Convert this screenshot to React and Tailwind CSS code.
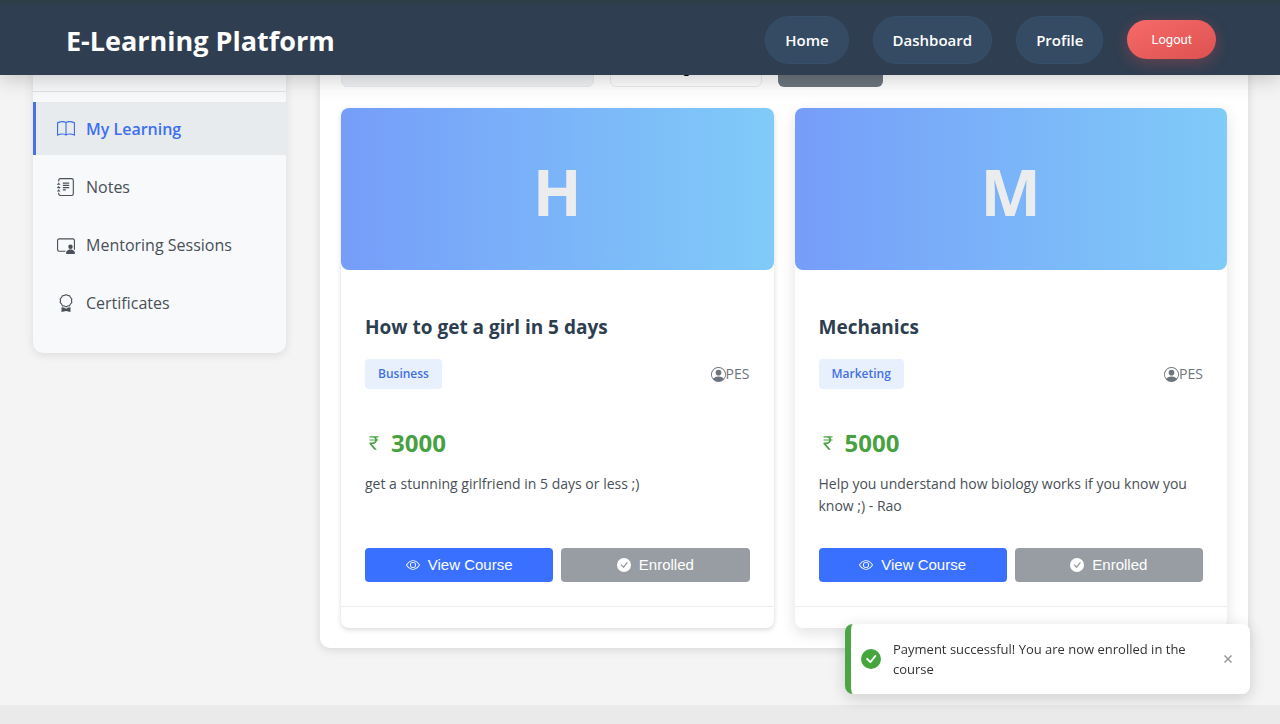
import {
  BsAward,
  BsBook,
  BsCheckCircleFill,
  BsCurrencyRupee,
  BsEye,
  BsJournalText,
  BsPersonCircle,
  BsPersonVideo3,
} from "react-icons/bs";

const navLinks = ["Home", "Dashboard", "Profile"];

const sideLinks = [
  { label: "My Learning", Icon: BsBook, active: true },
  { label: "Notes", Icon: BsJournalText },
  { label: "Mentoring Sessions", Icon: BsPersonVideo3 },
  { label: "Certificates", Icon: BsAward },
];

const courses = [
  {
    title: "How to get a girl in 5 days",
    category: "Business",
    author: "PES",
    price: 3000,
    text: "get a stunning girlfriend in 5 days or less ;)",
  },
  {
    title: "Mechanics",
    category: "Marketing",
    author: "PES",
    price: 5000,
    text: "Help you understand how biology works if you know you know ;) - Rao",
    raised: true,
  },
];

function Header() {
  return (
    <header className="sticky top-0 z-10 flex h-[75px] items-center justify-between border-t-4 border-[#2f3d49] bg-[#2f3e51] px-16 pl-[66px] shadow-[0_4px_20px_rgba(0,0,0,0.2)]">
      <h1 className="pt-[2px] text-[27px] leading-9 font-bold text-white">E-Learning Platform</h1>
      <nav className="flex items-center gap-6">
        {navLinks.map((label) => (
          <a
            key={label}
            href="#"
            className="rounded-3xl border border-[#35506b] bg-[#354b64] px-[19px] py-[10px] text-[15px] leading-[26px] font-semibold text-white"
          >
            {label}
          </a>
        ))}
        <button
          type="button"
          className="h-[39px] rounded-[20px] bg-linear-to-br from-[#f66a6a] to-[#dd5151] px-6 font-['Roboto',sans-serif] text-[13px] text-white shadow-[0_4px_15px_rgba(238,82,83,0.3)]"
        >
          Logout
        </button>
      </nav>
    </header>
  );
}

function Sidebar() {
  return (
    <aside className="w-[253px] shrink-0 rounded-[10px] bg-[#f8f9fb] pb-6 shadow-[0_2px_10px_rgba(0,0,0,0.1)]">
      <div className="h-[67px] border-b border-[#dee2e6]" />
      <nav className="mt-[10px] flex flex-col gap-[5px]">
        {sideLinks.map(({ label, Icon, active }) => (
          <a
            key={label}
            href="#"
            className={
              "flex h-[53px] items-center gap-[11px] border-l-3 pt-px pl-[21px] text-base " +
              (active
                ? "border-[#4a72e0] bg-[#e8ebee] font-semibold text-[#3d6ff0]"
                : "border-transparent text-[#495057]")
            }
          >
            <Icon className="size-[18px]" />
            {label}
          </a>
        ))}
      </nav>
    </aside>
  );
}

function Filters() {
  return (
    <form className="mb-[21px] flex h-[41px] gap-4 font-['Liberation_Sans',sans-serif] text-base">
      <input
        type="search"
        aria-label="Search courses"
        className="w-[253px] rounded-md border border-[#e8eaed] bg-[#f1f2f5] px-3"
      />
      <select
        aria-label="Category"
        className="w-[152px] appearance-none rounded-md border border-[#e9ebed] bg-white px-[15px] pt-[3px] text-black"
      >
        <option>All Categories</option>
      </select>
      <button type="button" aria-label="Filter" className="w-[105px] rounded-md bg-[#6c757d]" />
    </form>
  );
}

function CourseCard({ title, category, author, price, text, raised }) {
  return (
    <article
      className={
        "flex flex-col rounded-lg bg-white pb-[21px] " +
        (raised ? "shadow-[0_5px_15px_rgba(0,0,0,0.12)]" : "shadow-[0_2px_5px_rgba(0,0,0,0.15)]")
      }
    >
      <div className="flex h-[162px] items-center justify-center rounded-lg bg-linear-to-r from-[#769df9] to-[#80cbf8] pt-[5px] text-[64px] font-bold text-[#ebeced]">
        {title[0]}
      </div>
      <div className="flex flex-1 flex-col border-b border-[#eeeeee] px-6 pt-[45px] pb-6">
        <h2 className="text-[19px] leading-6 font-bold text-[#2c3e50]">{title}</h2>
        <div className="mt-5 flex items-center justify-between">
          <span className="rounded bg-[#e8f0fe] px-[13px] text-xs leading-[30px] font-semibold text-[#4470e2]">
            {category}
          </span>
          <span className="flex items-center text-sm text-[#6c757d]">
            <BsPersonCircle className="size-[15px]" />
            {author}
          </span>
        </div>
        <p className="mt-[38px] flex items-center gap-2 text-2xl leading-8 font-bold text-[#48a141]">
          <BsCurrencyRupee className="size-[18px]" />
          {price}
        </p>
        <p className="mt-[14px] min-h-11 text-sm leading-[22px] text-[#495057]">{text}</p>
        <div className="mt-auto grid grid-cols-2 gap-2 pt-[31px] font-['Liberation_Sans',sans-serif] text-[15px] text-white">
          <button
            type="button"
            className="flex h-[34px] items-center justify-center gap-2 rounded bg-[#3a70ff]"
          >
            <BsEye className="size-[14px]" />
            View Course
          </button>
          <button
            type="button"
            disabled
            className="flex h-[34px] items-center justify-center gap-2 rounded bg-[#989da3]"
          >
            <BsCheckCircleFill className="size-[14px]" />
            Enrolled
          </button>
        </div>
      </div>
    </article>
  );
}

function Toast() {
  return (
    <div
      role="status"
      className="fixed right-[30px] bottom-[30px] z-20 flex w-[405px] items-center gap-3 rounded-lg border-l-6 border-[#4aa644] bg-white py-[15px] pr-[14px] pl-[10px] shadow-[0_4px_16px_rgba(0,0,0,0.16)]"
    >
      <BsCheckCircleFill className="size-5 shrink-0 text-[#45a63e]" />
      <p className="flex-1 text-[13px] leading-5 text-[#333333]">
        Payment successful! You are now enrolled in the course
      </p>
      <button type="button" aria-label="Close" className="flex size-4 items-center justify-center text-[#999999]">
        <svg viewBox="0 0 8 8" className="size-2" stroke="currentColor" strokeWidth="1.5">
          <path d="M.5.5l7 7M7.5.5l-7 7" />
        </svg>
      </button>
    </div>
  );
}

export default function App() {
  return (
    <div className="flex min-h-screen flex-col bg-[#f4f4f4] font-['Open_Sans','Noto_Sans',sans-serif]">
      <Header />
      <div className="-mt-[50px] mb-[57px] flex items-start gap-[34px] pr-8 pl-[33px]">
        <Sidebar />
        <main className="flex-1 rounded-[10px] bg-white p-[21px] pb-5 shadow-[0_2px_10px_rgba(0,0,0,0.12)]">
          <Filters />
          <div className="grid grid-cols-2 gap-[21px]">
            {courses.map((course) => (
              <CourseCard key={course.title} {...course} />
            ))}
          </div>
        </main>
      </div>
      <footer className="min-h-[19px] flex-1 bg-[#eaeaea]" />
      <Toast />
    </div>
  );
}
